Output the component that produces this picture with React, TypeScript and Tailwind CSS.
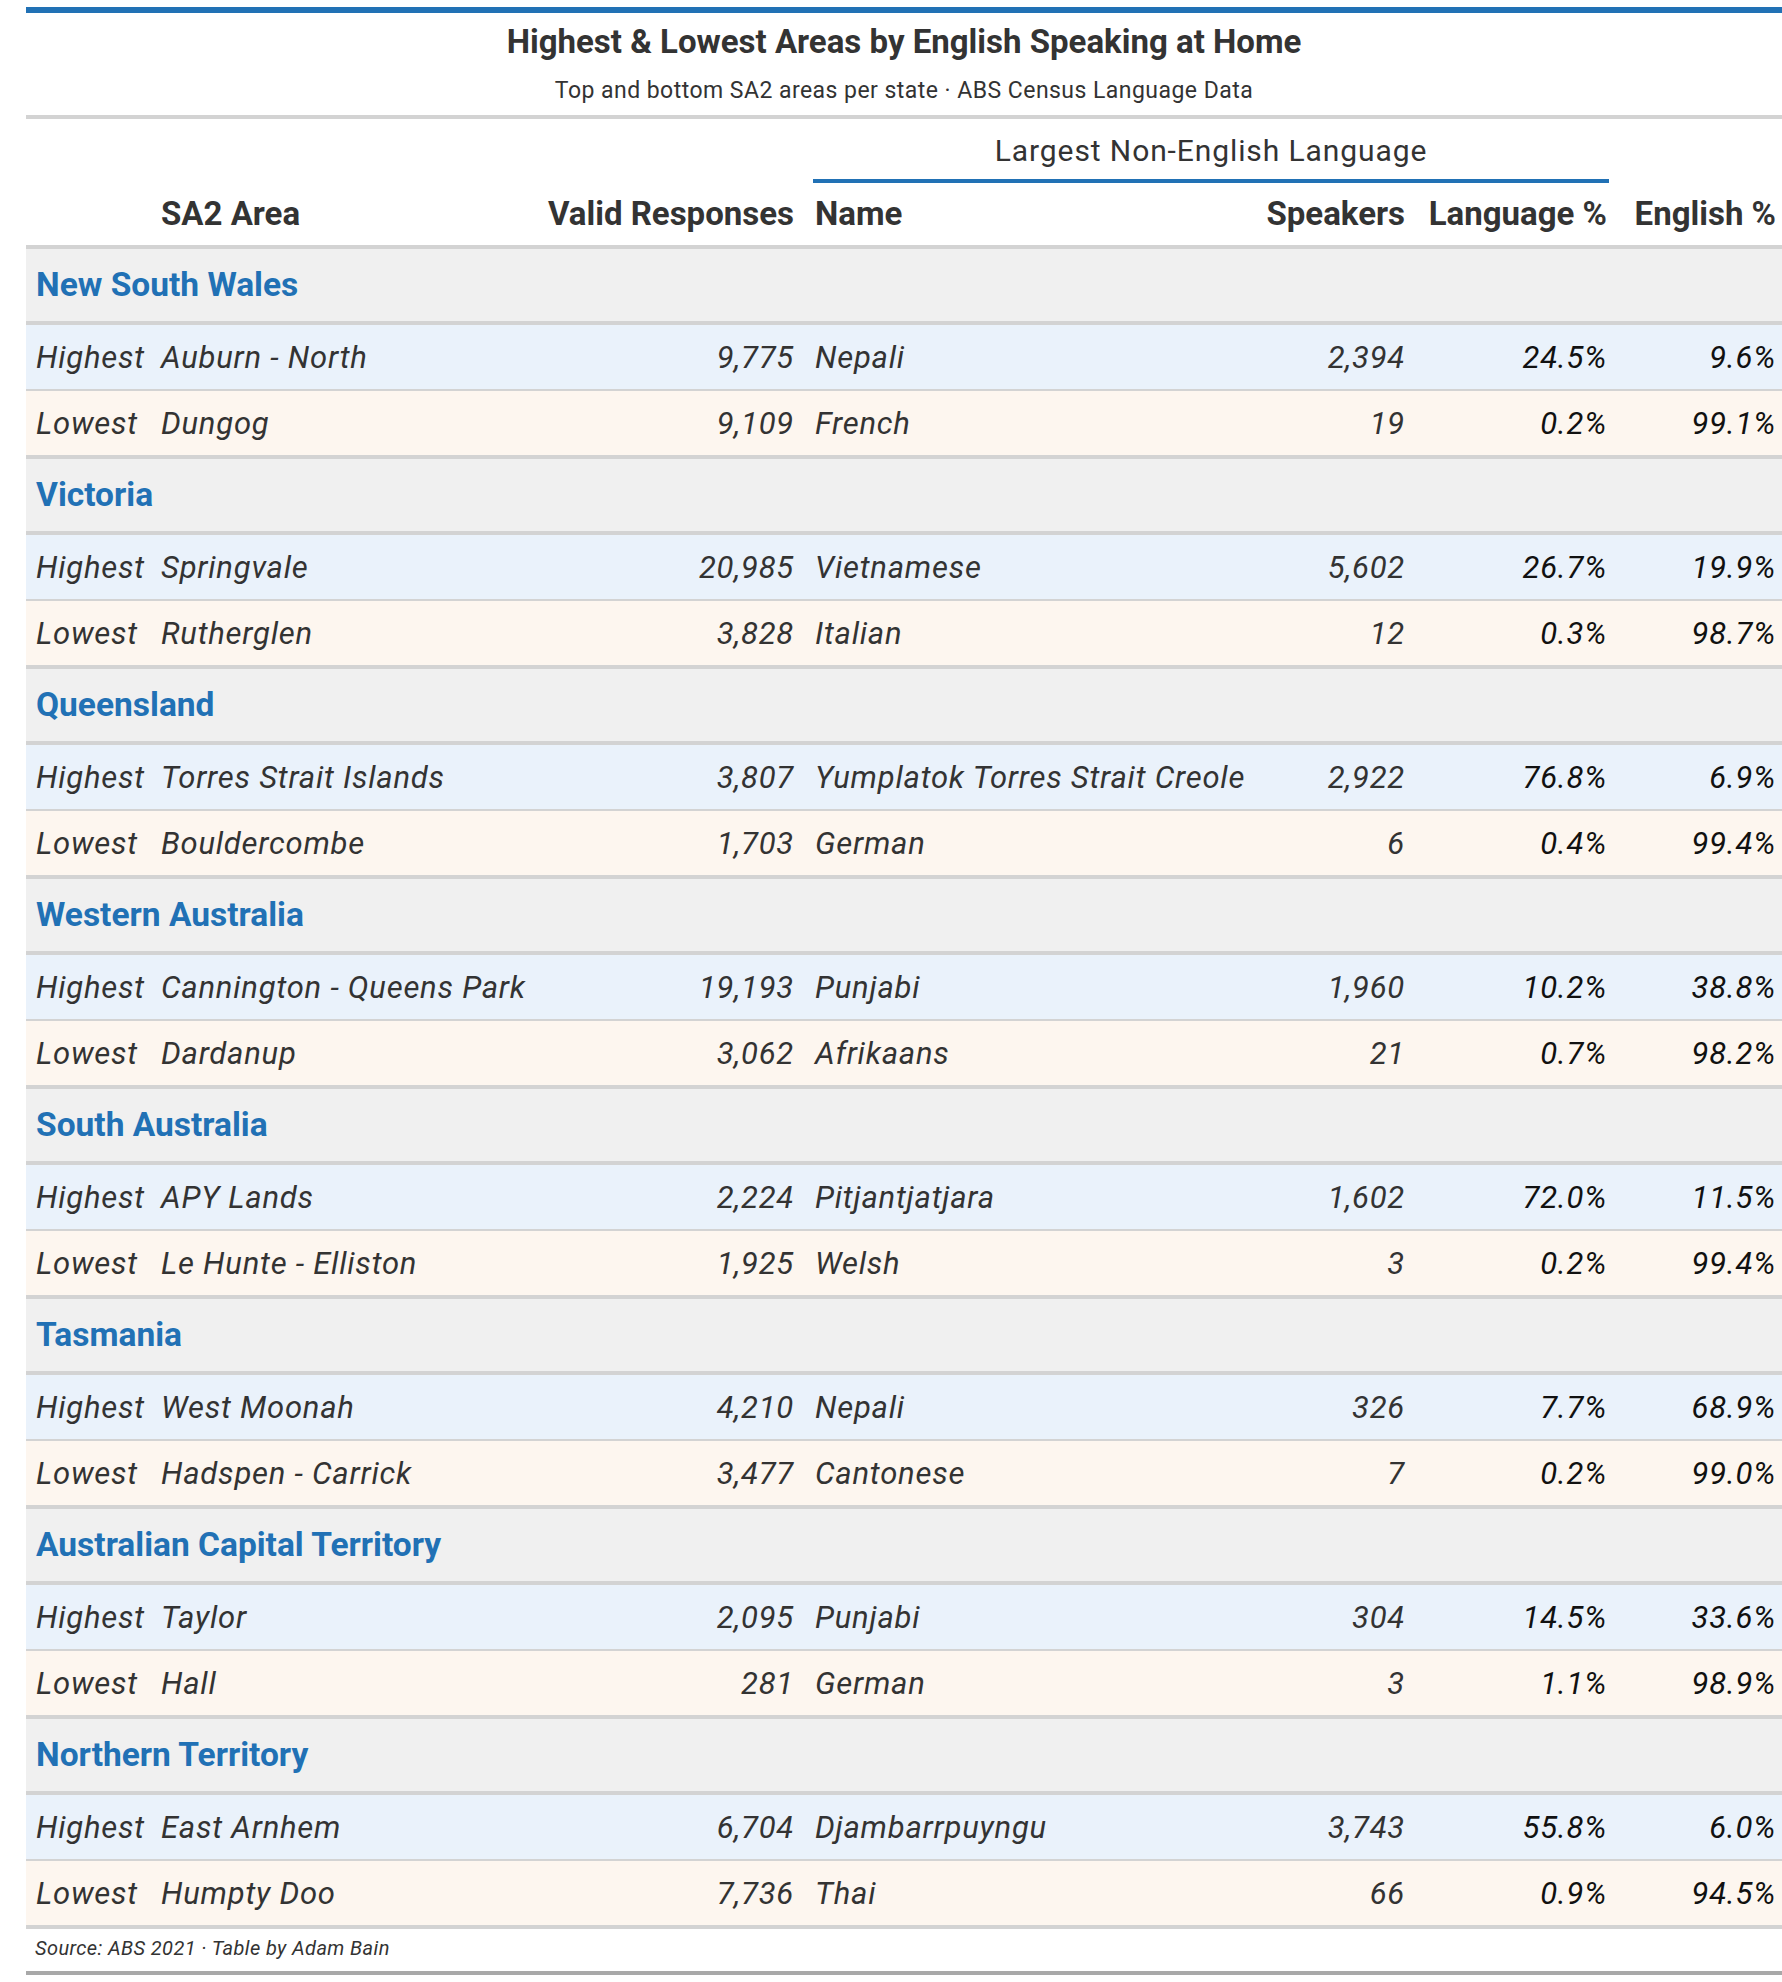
const rows = [
  {
    state: 'New South Wales',
    high: ['Auburn - North', '9,775', 'Nepali', '2,394', '24.5%', '9.6%'],
    low: ['Dungog', '9,109', 'French', '19', '0.2%', '99.1%'],
  },
  {
    state: 'Victoria',
    high: ['Springvale', '20,985', 'Vietnamese', '5,602', '26.7%', '19.9%'],
    low: ['Rutherglen', '3,828', 'Italian', '12', '0.3%', '98.7%'],
  },
  {
    state: 'Queensland',
    high: ['Torres Strait Islands', '3,807', 'Yumplatok Torres Strait Creole', '2,922', '76.8%', '6.9%'],
    low: ['Bouldercombe', '1,703', 'German', '6', '0.4%', '99.4%'],
  },
  {
    state: 'Western Australia',
    high: ['Cannington - Queens Park', '19,193', 'Punjabi', '1,960', '10.2%', '38.8%'],
    low: ['Dardanup', '3,062', 'Afrikaans', '21', '0.7%', '98.2%'],
  },
  {
    state: 'South Australia',
    high: ['APY Lands', '2,224', 'Pitjantjatjara', '1,602', '72.0%', '11.5%'],
    low: ['Le Hunte - Elliston', '1,925', 'Welsh', '3', '0.2%', '99.4%'],
  },
  {
    state: 'Tasmania',
    high: ['West Moonah', '4,210', 'Nepali', '326', '7.7%', '68.9%'],
    low: ['Hadspen - Carrick', '3,477', 'Cantonese', '7', '0.2%', '99.0%'],
  },
  {
    state: 'Australian Capital Territory',
    high: ['Taylor', '2,095', 'Punjabi', '304', '14.5%', '33.6%'],
    low: ['Hall', '281', 'German', '3', '1.1%', '98.9%'],
  },
  {
    state: 'Northern Territory',
    high: ['East Arnhem', '6,704', 'Djambarrpuyngu', '3,743', '55.8%', '6.0%'],
    low: ['Humpty Doo', '7,736', 'Thai', '66', '0.9%', '94.5%'],
  },
];

// column widths measured off the reference, table spans 26px -> 1782px
const cols = 'grid grid-cols-[125px_389px_266px_456px_155px_202px_163px]';

const DataRow = ({ label, cells }: { label: string; cells: string[] }) => {
  const isHigh = label === 'Highest';
  return (
    <div
      className={`${cols} items-center pt-[2px] italic text-[31px] tracking-[0.025em] text-[#333] ${
        isHigh
          ? 'h-[66px] bg-[#eaf2fb] border-b-2 border-[#d3d3d3]'
          : 'h-[68px] bg-[#fdf6ef] border-b-4 border-[#d3d3d3]'
      }`}
    >
      <span className="pl-[10px]">{label}</span>
      <span className="pl-[10px] whitespace-nowrap">{cells[0]}</span>
      <span className="pr-[12px] text-right">{cells[1]}</span>
      <span className="pl-[9px] whitespace-nowrap">{cells[2]}</span>
      <span className="pr-[12px] text-right">{cells[3]}</span>
      <span className="pr-[12px] text-right text-[#111]">{cells[4]}</span>
      <span className="pr-[6px] text-right text-[#111]">{cells[5]}</span>
    </div>
  );
};

export default function App() {
  return (
    <div className="bg-white min-h-[1982px] pt-[7px] pl-[26px] font-['Roboto',sans-serif]">
      <div className="w-[1756px] border-t-[6px] border-[#2171b5]">
        <div className="flex flex-col items-center pt-[10px] pb-[11px] border-b-4 border-[#d3d3d3] text-[#333]">
          <h1 className="text-[33px] leading-[38px] font-bold">
            Highest &amp; Lowest Areas by English Speaking at Home
          </h1>
          <p className="mt-[17px] text-[23px] leading-[26px] tracking-[0.02em]">
            Top and bottom SA2 areas per state · ABS Census Language Data
          </p>
        </div>

        <div className="border-b-4 border-[#d3d3d3] text-[#333]">
          <div className={`${cols} h-[64px]`}>
            <div className="col-start-4 col-span-3 ml-[7px] mr-[10px] flex items-end justify-center border-b-4 border-[#2171b5] pb-[11px]">
              <span className="text-[30px] leading-[34px] tracking-[0.03em]">Largest Non-English Language</span>
            </div>
          </div>
          <div className={`${cols} h-[62px] items-center text-[33px] leading-[38px] font-bold`}>
            <span />
            <span className="pl-[10px]">SA2 Area</span>
            <span className="pr-[12px] text-right whitespace-nowrap">Valid Responses</span>
            <span className="pl-[9px]">Name</span>
            <span className="pr-[12px] text-right">Speakers</span>
            <span className="pr-[12px] text-right whitespace-nowrap">Language %</span>
            <span className="pr-[6px] text-right whitespace-nowrap">English %</span>
          </div>
        </div>

        {rows.map((r) => (
          <div key={r.state}>
            <div className="h-[76px] flex items-center bg-[#f0f0f0] border-b-4 border-[#d3d3d3] pl-[10px]">
              <span className="text-[33.5px] font-bold text-[#2171b5]">{r.state}</span>
            </div>
            <DataRow label="Highest" cells={r.high} />
            <DataRow label="Lowest" cells={r.low} />
          </div>
        ))}

        <div className="h-[46px] flex items-center pl-[9px] border-b-4 border-[#a8a8a8] pb-[4px]">
          <span className="italic text-[20px] leading-[24px] tracking-[0.02em] text-[#333]">
            Source: ABS 2021 · Table by Adam Bain
          </span>
        </div>
      </div>
    </div>
  );
}
